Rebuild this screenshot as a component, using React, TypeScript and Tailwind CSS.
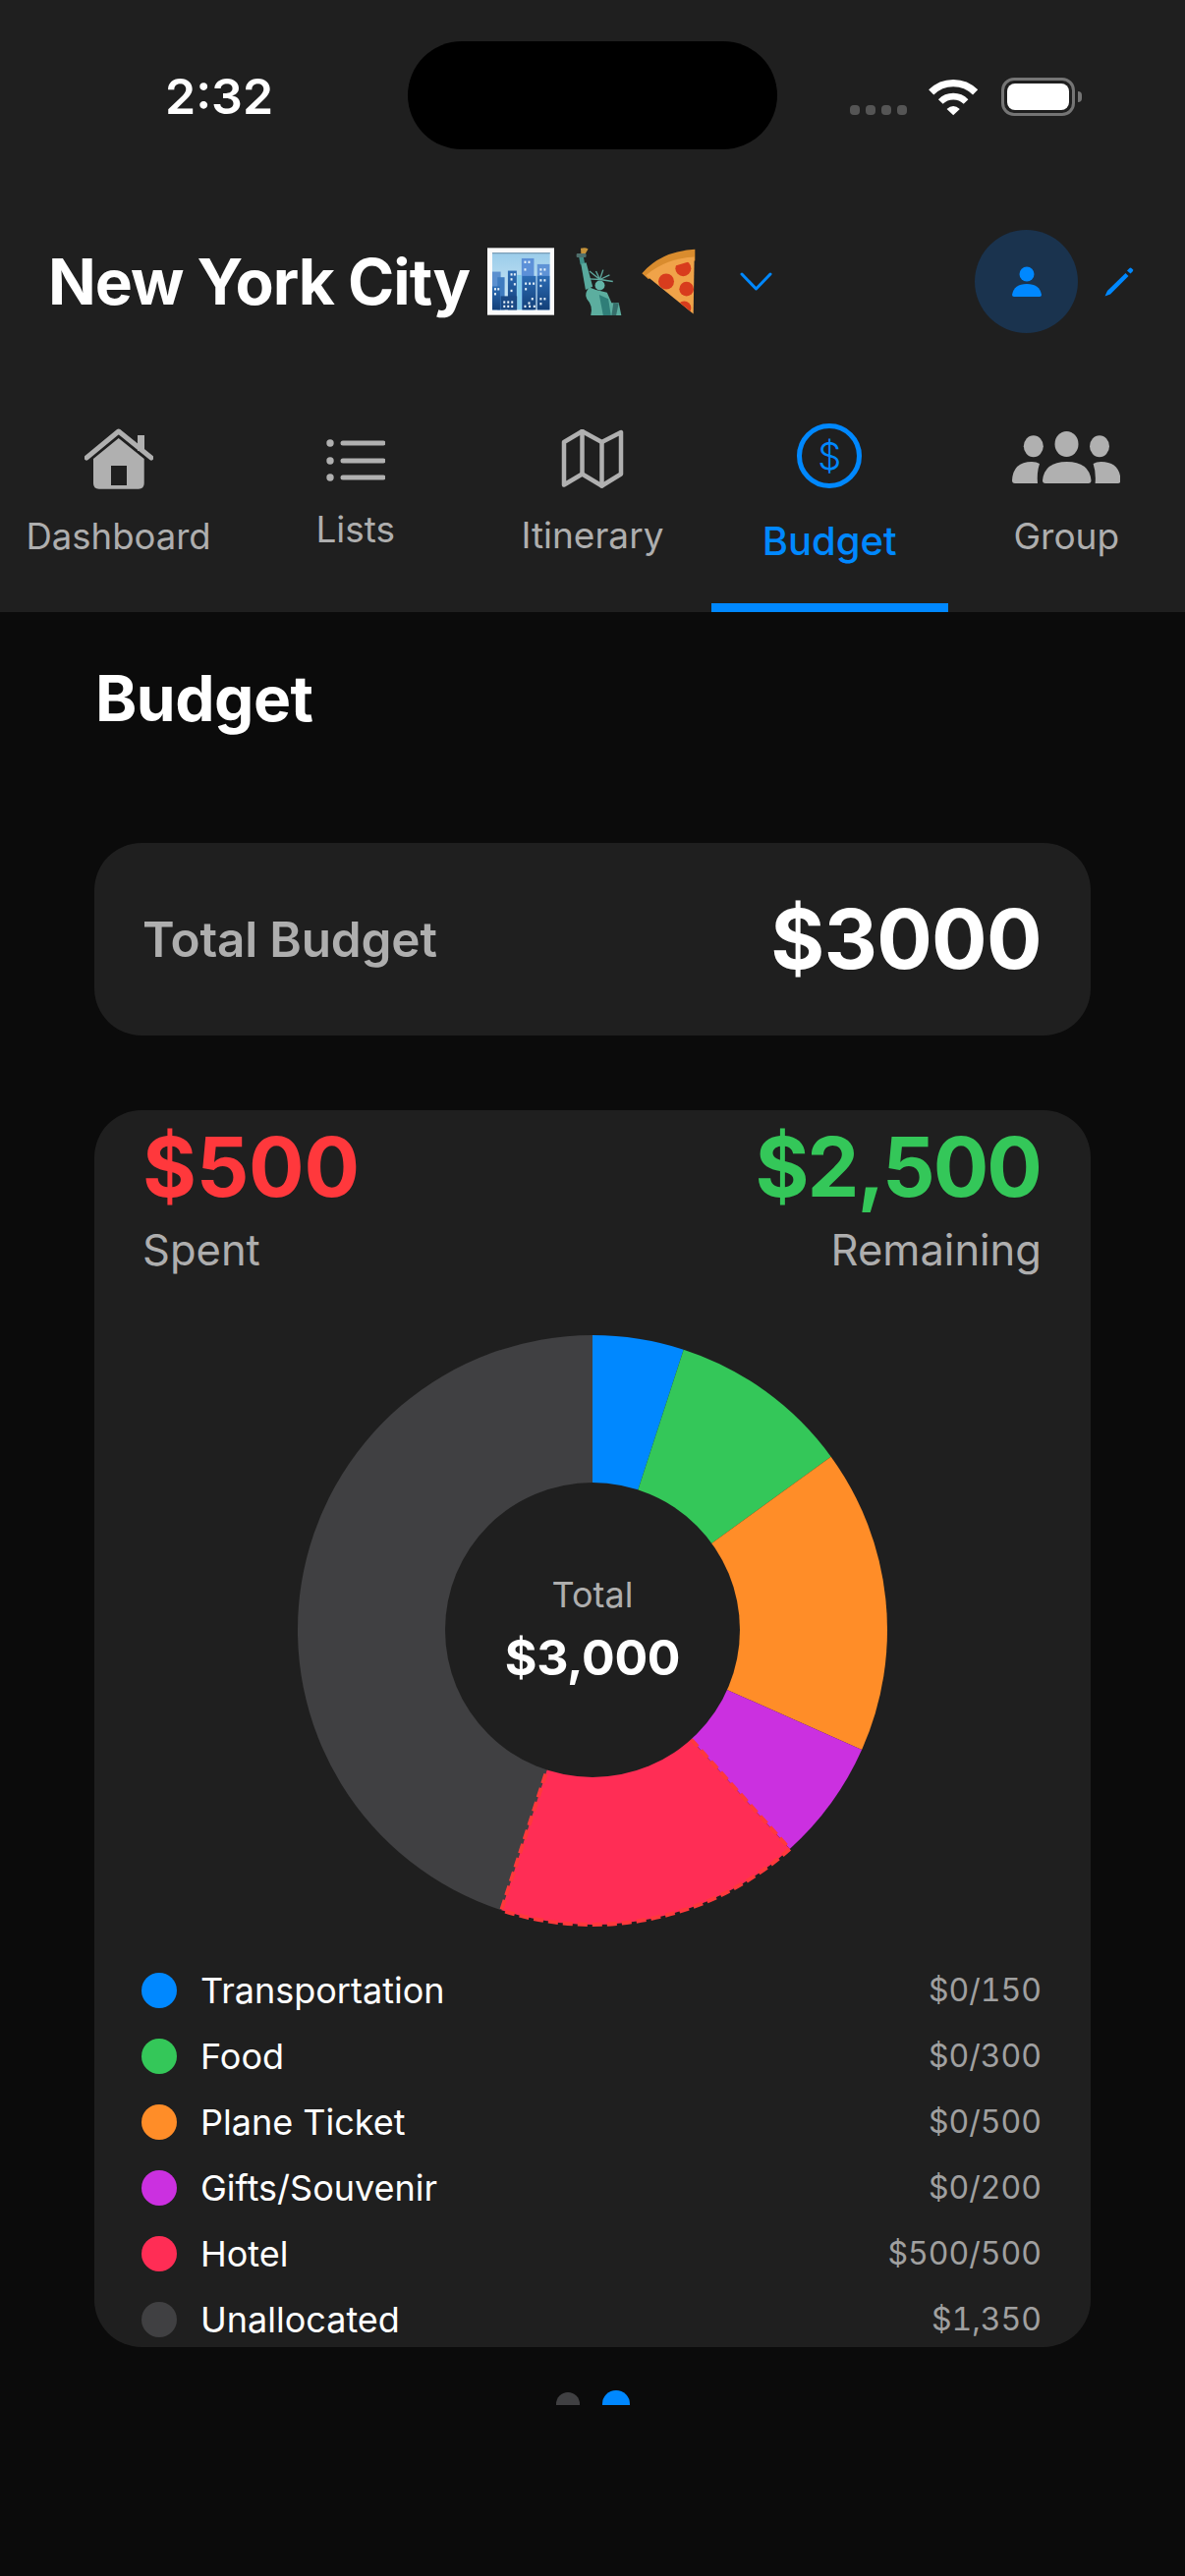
import React from 'react';

const slices = [
  { name: 'Transportation', amount: '$0/150', value: 150, color: '#0088ff', dot: 'bg-[#0088ff]' },
  { name: 'Food', amount: '$0/300', value: 300, color: '#34c759', dot: 'bg-[#34c759]' },
  { name: 'Plane Ticket', amount: '$0/500', value: 500, color: '#ff8d28', dot: 'bg-[#ff8d28]' },
  { name: 'Gifts/Souvenir', amount: '$0/200', value: 200, color: '#cb30e0', dot: 'bg-[#cb30e0]' },
  { name: 'Hotel', amount: '$500/500', value: 500, color: '#ff2d55', dot: 'bg-[#ff2d55]' },
  { name: 'Unallocated', amount: '$1,350', value: 1350, color: '#404042', dot: 'bg-[#404042]' },
];

const slicePath = (from: number, to: number, r: number) => {
  const point = (v: number) => {
    const a = (v / 3000) * Math.PI * 2;
    return `${(Math.sin(a) * r).toFixed(2)} ${(-Math.cos(a) * r).toFixed(2)}`;
  };
  const large = to - from > 1500 ? 1 : 0;
  return `M0 0 L${point(from)} A${r} ${r} 0 ${large} 1 ${point(to)} Z`;
};

const Donut: React.FC = () => {
  let acc = 0;
  const parts = slices.map((s) => {
    const part = { ...s, d: slicePath(acc, acc + s.value, 300) };
    acc += s.value;
    return part;
  });
  return (
    <svg width="604" height="604" viewBox="-302 -302 604 604" className="block">
      {parts.filter((p) => p.name !== 'Hotel').map((p) => (
        <path key={p.name} d={p.d} fill={p.color} />
      ))}
      {parts.filter((p) => p.name === 'Hotel').map((p) => (
        <path key={p.name} d={p.d} fill={p.color} stroke="#ff383c" strokeWidth="4" strokeDasharray="10 5" />
      ))}
      <circle cx="0" cy="0" r="150" fill="#1f1f1f" />
    </svg>
  );
};

const Wifi = () => (
  <svg width="52" height="38" viewBox="270 25 155 115" fill="none" stroke="#fff">
    <path d="M277 67 A96 96 0 0 1 413 67" strokeWidth="22" />
    <path d="M306 96 A55 55 0 0 1 384 96" strokeWidth="20" />
    <path d="M325 119 Q345 100 365 119 L345 138 Z" fill="#fff" stroke="none" />
  </svg>
);

const Battery = () => (
  <div className="flex items-center">
    <div className="flex h-[39px] w-[75px] items-center justify-center rounded-[13px] border-[3px] border-[#757575]">
      <div className="h-[27px] w-[63px] rounded-[8px] bg-white" />
    </div>
    <div className="ml-[3px] h-[11px] w-[4px] rounded-r-full bg-[#757575]" />
  </div>
);

const CityEmoji = () => {
  const windows = [
    [36, 145], [46, 145], [36, 160], [86, 100], [96, 100], [86, 115], [96, 130], [86, 150], [64, 185], [76, 185], [88, 185], [64, 198], [76, 198], [88, 198],
    [128, 62], [140, 62], [128, 85], [130, 128], [142, 128], [154, 128], [130, 145], [150, 175], [140, 188], [128, 198], [142, 198], [156, 198],
    [176, 85], [188, 85], [176, 98], [176, 118], [188, 118], [176, 135], [176, 175], [188, 175], [176, 190],
  ];
  return (
    <svg width="68" height="69" viewBox="15 22 205 206" className="block">
      <defs>
        <linearGradient id="sky" x1="0" y1="0" x2="0" y2="1">
          <stop offset="0" stopColor="#9accea" />
          <stop offset="1" stopColor="#d6edf8" />
        </linearGradient>
        <linearGradient id="bldg" x1="0" y1="0" x2="0" y2="1">
          <stop offset="0" stopColor="#2c6cb4" />
          <stop offset="1" stopColor="#123f78" />
        </linearGradient>
      </defs>
      <rect x="15" y="22" width="205" height="206" fill="#fafafa" />
      <rect x="30" y="36" width="177" height="176" fill="url(#sky)" />
      <rect x="30" y="36" width="177" height="4" fill="#7d9fb8" />
      <rect x="120" y="54" width="38" height="158" fill="#5c90d8" />
      <rect x="168" y="72" width="38" height="140" fill="#5f93d6" />
      <rect x="30" y="95" width="26" height="117" fill="#5c90cf" />
      <rect x="46" y="112" width="22" height="100" fill="#3f7cc0" />
      <rect x="106" y="105" width="14" height="107" fill="#7fc8ea" />
      <rect x="30" y="140" width="24" height="72" fill="url(#bldg)" />
      <rect x="78" y="92" width="27" height="120" fill="url(#bldg)" />
      <rect x="56" y="170" width="50" height="42" fill="#1b4a85" />
      <rect x="122" y="108" width="42" height="104" fill="url(#bldg)" />
      <rect x="168" y="108" width="38" height="104" fill="url(#bldg)" />
      {windows.map(([x, y]) => (
        <rect key={`${x}-${y}`} x={x} y={y} width="6" height="7" fill="#e6f2fa" />
      ))}
    </svg>
  );
};

const LibertyEmoji = () => (
  <svg width="47" height="69" viewBox="288 20 142 208" className="block">
    <path d="M303 22 Q318 18 326 24 L318 38 L304 38 Z" fill="#c4923a" />
    <rect x="290" y="38" width="30" height="12" rx="3" fill="#4f6f6c" />
    <path d="M298 50 H312 L316 72 H302 Z" fill="#3f8f88" />
    <path d="M304 70 L320 66 L340 140 L318 150 Z" fill="#58a99d" />
    <g stroke="#5fa99f" strokeWidth="4">
      <path d="M362 118 L330 92" />
      <path d="M362 118 L350 92" />
      <path d="M362 118 L372 88" />
      <path d="M362 118 L392 104" />
      <path d="M362 118 L402 124" />
      <path d="M362 118 L328 116" />
    </g>
    <circle cx="362" cy="136" r="15" fill="#63b5a8" />
    <path d="M330 142 L350 150 L384 158 L398 190 L420 190 L428 228 H334 Q342 200 322 178 Q312 160 330 142 Z" fill="#5cae9f" />
    <path d="M360 165 L388 178 L396 228 H372 Z" fill="#2f7e78" />
    <path d="M404 188 L420 192 L412 228 H398 Z" fill="#356e6a" />
  </svg>
);

const PizzaEmoji = () => (
  <svg width="55" height="67" viewBox="485 25 165 200" className="block">
    <defs>
      <clipPath id="slice">
        <path d="M497 104 L646 60 L644 225 Z" />
      </clipPath>
    </defs>
    <path d="M486 100 Q545 32 648 27 L648 62 Q560 60 506 118 Z" fill="#d98c2e" />
    <path d="M498 106 Q560 54 646 50 L643 224 Z" fill="#f0a349" />
    <g clipPath="url(#slice)">
      <circle cx="612" cy="85" r="24" fill="#d83c1d" />
      <circle cx="560" cy="125" r="24" fill="#d83c1d" />
      <circle cx="622" cy="148" r="22" fill="#d83c1d" />
      <circle cx="615" cy="206" r="21" fill="#d83c1d" />
    </g>
  </svg>
);

const HomeIcon = () => (
  <svg width="70" height="62" viewBox="0 0 70 62" className="block">
    <path d="M2 30 L34.7 3 L68 30" fill="none" stroke="#b0b0b0" strokeWidth="5" strokeLinecap="round" strokeLinejoin="round" />
    <rect x="54" y="7" width="7" height="16" fill="#b0b0b0" />
    <path fillRule="evenodd" d="M34.7 10 L60.7 31 V56 Q60.7 61.7 55 61.7 H14.7 Q9 61.7 9 56 V31 Z M27 38 V58 H43 V38 Z" fill="#b0b0b0" />
  </svg>
);

const ListIcon = () => (
  <svg width="60" height="44" viewBox="0 0 60 44" className="block" fill="#b0b0b0" stroke="#b0b0b0">
    {[4, 22, 39].map((y) => (
      <g key={y}>
        <circle cx="4" cy={y} r="3.7" stroke="none" />
        <path d={`M17 ${y} H58`} strokeWidth="5" strokeLinecap="round" />
      </g>
    ))}
  </svg>
);

const MapIcon = () => (
  <svg width="64" height="60" viewBox="0 0 64 60" className="block" fill="none" stroke="#b0b0b0" strokeWidth="4.5" strokeLinejoin="round" strokeLinecap="round">
    <path d="M3 13 L21.5 2 L41.5 13 L61 3 V45.5 L41.5 57.5 L21.5 45.5 L3 56.5 Z" />
    <path d="M21.5 2 V45.5 M41.5 13 V57.5" />
  </svg>
);

const GroupIcon = () => (
  <svg width="110" height="54" viewBox="0 0 110 54" className="block" fill="#b0b0b0">
    <ellipse cx="21.8" cy="15.3" rx="10" ry="11" />
    <ellipse cx="55.5" cy="13" rx="12" ry="13" />
    <ellipse cx="89" cy="15.3" rx="10" ry="11" />
    <path d="M0 50 Q1 31 20 31 Q25 31 28 33 Q25 42 26 53 H3 Q0 53 0 50 Z" />
    <path d="M110.6 50 Q109.6 31 90.6 31 Q85.6 31 82.6 33 Q85.6 42 84.6 53 H107.6 Q110.6 53 110.6 50 Z" />
    <path d="M31 50 Q33 31 55.7 31 Q78.5 31 80.5 50 Q80.5 53 77.5 53 H34 Q31 53 31 50 Z" />
  </svg>
);

const tabs = [
  { label: 'Dashboard', icon: <HomeIcon />, top: 'pt-[97px]', gap: 'mt-[30px]', text: 'text-[36.5px] text-[#aeaeae]', active: false },
  { label: 'Lists', icon: <ListIcon />, top: 'pt-[108px]', gap: 'mt-[29px]', text: 'text-[37px] text-[#aeaeae]', active: false },
  { label: 'Itinerary', icon: <MapIcon />, top: 'pt-[98px]', gap: 'mt-[29px]', text: 'text-[37px] text-[#aeaeae]', active: false },
  {
    label: 'Budget',
    icon: (
      <div className="flex h-[66px] w-[66px] items-center justify-center rounded-full border-[5px] border-[#0088ff] text-[38px] leading-none font-light text-[#0088ff]">
        $
      </div>
    ),
    top: 'pt-[92px]',
    gap: 'mt-[34px]',
    text: 'text-[40px] font-medium text-[#0088ff]',
    active: true,
  },
  { label: 'Group', icon: <GroupIcon />, top: 'pt-[100px]', gap: 'mt-[34px]', text: 'text-[37px] text-[#aeaeae]', active: false },
];

const App: React.FC = () => {
  return (
    <div className="h-[2622px] w-[1206px] overflow-hidden bg-[#0b0b0b] [font-family:Inter,sans-serif] text-white">
      <header className="h-[623px] bg-[#1f1f1f]">
        <div className="flex h-[152px] pt-[42px]">
          <div className="w-[415px] pt-[31px] pl-[168px] text-[50px] leading-none font-semibold">2:32</div>
          <div className="h-[110px] w-[376px] rounded-full bg-black" />
          <div className="flex h-[76px] items-end pl-[74px]">
            <div className="flex gap-[6px] pb-[1px]">
              {[0, 1, 2, 3].map((i) => (
                <div key={i} className="h-[10px] w-[10px] rounded-[4px] bg-[#555555]" />
              ))}
            </div>
            <div className="mr-[22px] ml-[22px]">
              <Wifi />
            </div>
            <Battery />
          </div>
        </div>

        <div className="mt-[82px] flex h-[105px] items-center pr-[52px] pl-[49px]">
          <h1 className="w-[447px] text-[64px] leading-none font-bold tracking-[-1px] whitespace-nowrap">New York City</h1>
          <CityEmoji />
          <div className="ml-[22px]">
            <LibertyEmoji />
          </div>
          <div className="ml-[20px]">
            <PizzaEmoji />
          </div>
          <svg width="33" height="19" viewBox="0 0 33 19" fill="none" stroke="#0088ff" strokeWidth="3" strokeLinecap="round" strokeLinejoin="round" className="ml-[45px]">
            <path d="M2 2 L16.5 17 L31 2" />
          </svg>
          <div className="ml-auto flex h-[105px] w-[105px] items-center justify-center rounded-full bg-[#1a334e]">
            <svg width="30" height="32" viewBox="0 0 30 32" fill="#0088ff">
              <circle cx="15" cy="8" r="7.5" />
              <path d="M0 29 Q2 18 15 18 Q28 18 30 29 Q30 31 28 31 H2 Q0 31 0 29 Z" />
            </svg>
          </div>
          <svg width="30" height="30" viewBox="0 0 30 30" fill="#0088ff" className="ml-[27px]">
            <path d="M0.5 29.5 L3 24 L21.5 6 L24.5 9 L6 27.5 Z" />
            <path d="M23 3.5 L25.5 1 Q26.5 0.2 27.5 1 L28.8 2.3 Q29.5 3.2 29 4 L26.5 6.5 Z" />
          </svg>
        </div>

        <nav className="flex h-[284px]">
          {tabs.map((t) => (
            <div key={t.label} className={`flex h-full w-[241.2px] flex-col items-center ${t.top}`}>
              {t.icon}
              <span className={`${t.gap} leading-none ${t.text}`}>{t.label}</span>
              {t.active && <div className="mt-auto h-[9px] w-full bg-[#0088ff]" />}
            </div>
          ))}
        </nav>
      </header>

      <main className="px-[96px]">
        <h2 className="pt-[56px] pl-[1px] text-[64px] leading-none font-bold tracking-[-0.5px]">Budget</h2>

        <section className="mt-[115px] flex h-[196px] items-center justify-between rounded-[48px] bg-[#1f1f1f] pr-[50px] pl-[49px]">
          <span className="pt-[1px] text-[49.5px] leading-none font-semibold tracking-[-0.2px] text-[#aeaeae]">Total Budget</span>
          <span className="text-[84px] leading-none font-bold tracking-[-0.7px]">$3000</span>
        </section>

        <section className="mt-[76px] h-[1259px] overflow-hidden rounded-[48px] bg-[#1f1f1f] px-[50px] pt-[16px]">
          <div className="flex justify-between">
            <div>
              <div className="-ml-[1px] text-[84px] leading-none font-bold tracking-[-0.3px] text-[#ff383c]">$500</div>
              <div className="mt-[21px] -ml-[1px] text-[43.5px] leading-none text-[#aeaeae]">Spent</div>
            </div>
            <div className="flex flex-col items-end">
              <div className="pr-[1px] text-[84px] leading-none font-bold tracking-[-2px] text-[#34c759]">$2,500</div>
              <div className="mt-[21px] text-[43.5px] leading-none text-[#aeaeae]">Remaining</div>
            </div>
          </div>

          <div className="relative mx-auto mt-[62.5px] w-[604px]">
            <Donut />
            <div className="absolute inset-0 flex flex-col items-center justify-center pb-[1px]">
              <span className="text-[36px] leading-none text-[#aeaeae]">Total</span>
              <span className="mt-[21px] text-[50px] leading-none font-bold tracking-[-0.3px]">$3,000</span>
            </div>
          </div>

          <ul className="mt-[31px]">
            {slices.map((s) => (
              <li key={s.name} className="flex h-[67px] items-center">
                <span className={`-ml-[2px] h-[36px] w-[36px] rounded-full ${s.dot}`} />
                <span className="ml-[24px] text-[36px] leading-none">{s.name}</span>
                <span className="ml-auto text-[32px] leading-none text-[#a0a0a0] tabular-nums">{s.amount}</span>
              </li>
            ))}
          </ul>
        </section>

        <div className="flex h-[59px] justify-center gap-[23px] overflow-hidden pt-[44px]">
          <div className="mt-[2px] h-[24px] w-[24px] rounded-full bg-[#404042]" />
          <div className="h-[28px] w-[28px] rounded-full bg-[#0088ff]" />
        </div>
      </main>
    </div>
  );
};

export default App;
